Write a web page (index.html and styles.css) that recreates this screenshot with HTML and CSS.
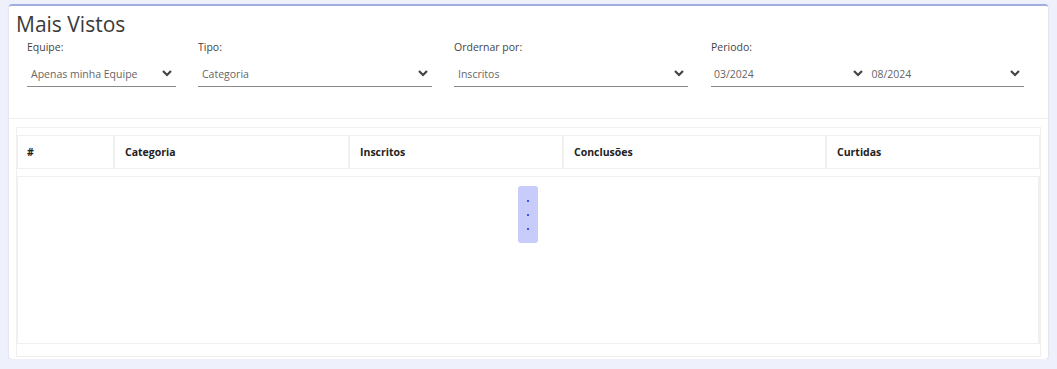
FILE: index.html
```html
<!DOCTYPE html>
<html lang="pt-BR">
<head>
    <meta charset="UTF-8">
    <meta name="viewport" content="width=device-width, initial-scale=1.0">
    <title>Mais Vistos</title>
    <link rel="stylesheet" href="styles.css">
</head>
<body>
    <div class="card">
        <h1 class="card-title">Mais Vistos</h1>
        <div class="filters">
            <div class="filter filter-equipe">
                <label>Equipe:</label>
                <div class="select">
                    <span>Apenas minha Equipe</span>
                    <svg class="chevron" viewBox="0 0 10 7"><polyline points="1,1 5,5 9,1"/></svg>
                </div>
            </div>
            <div class="filter filter-wide">
                <label>Tipo:</label>
                <div class="select">
                    <span>Categoria</span>
                    <svg class="chevron" viewBox="0 0 10 7"><polyline points="1,1 5,5 9,1"/></svg>
                </div>
            </div>
            <div class="filter filter-wide">
                <label>Ordernar por:</label>
                <div class="select">
                    <span>Inscritos</span>
                    <svg class="chevron" viewBox="0 0 10 7"><polyline points="1,1 5,5 9,1"/></svg>
                </div>
            </div>
            <div class="filter filter-periodo">
                <label>Periodo:</label>
                <div class="period">
                    <div class="select select-half">
                        <span>03/2024</span>
                        <svg class="chevron" viewBox="0 0 10 7"><polyline points="1,1 5,5 9,1"/></svg>
                    </div>
                    <div class="select select-half">
                        <span>08/2024</span>
                        <svg class="chevron" viewBox="0 0 10 7"><polyline points="1,1 5,5 9,1"/></svg>
                    </div>
                </div>
            </div>
        </div>
        <div class="table-section">
            <div class="table-box">
                <table class="table-head">
                    <tr>
                        <th class="col-num">#</th>
                        <th class="col-cat">Categoria</th>
                        <th class="col-ins">Inscritos</th>
                        <th class="col-con">Conclusões</th>
                        <th>Curtidas</th>
                    </tr>
                </table>
                <div class="table-body">
                    <!-- loading -->
                    <div class="loader">
                        <span class="dot"></span>
                        <span class="dot"></span>
                        <span class="dot"></span>
                    </div>
                </div>
            </div>
        </div>
    </div>
</body>
</html>
```

FILE: styles.css
```css
body {
    margin: 0;
    padding: 4px 9px 0;
    background-color: #eef0fb;
    font-family: "Open Sans", Arial, sans-serif;
    color: #3a3a3a;
}
.card {
    height: 353px;
    background-color: #fff;
    border-top: 2px solid #a1acdf;
    border-radius: 3px;
    box-shadow: 0 1px 2px rgba(0, 0, 0, 0.15);
}
.card-title {
    margin: 0;
    padding: 5px 7px 0;
    font-size: 21px;
    font-weight: 400;
    line-height: 27px;
    color: #3b3b3b;
}
.filters {
    display: flex;
    padding: 2px 24px 0 18px;
    height: 78px;
    border-bottom: 1px solid #efefef;
    box-sizing: content-box;
}
.filter {
    display: flex;
    flex-direction: column;
}
.filter-equipe {
    width: 149px;
    margin-right: 22px;
}
.filter-wide {
    width: 234px;
    margin-right: 22px;
}
.filter-periodo {
    flex: 1;
    margin-left: 1px;
}
.filter label {
    font-size: 10.5px;
    line-height: 14px;
    color: #444;
}
.select {
    display: flex;
    align-items: center;
    justify-content: space-between;
    margin-top: 7px;
    height: 25px;
    padding: 0 4px 0 4px;
    border-bottom: 1px solid #8a8a8a;
    font-size: 10.5px;
    color: #666;
}
.period {
    display: flex;
    border-bottom: 1px solid #8a8a8a;
    margin-top: 7px;
}
.period .select {
    margin-top: 0;
    border-bottom: none;
}
.select-half {
    flex: 1;
}
.select-half:first-child {
    padding-left: 3px;
    padding-right: 5px;
}
.chevron {
    width: 10px;
    height: 7px;
    fill: none;
    stroke: #444;
    stroke-width: 2.2;
}
.table-section {
    padding: 8px 7px 0;
}
.table-box {
    height: 221px;
    border: 1px solid #efefef;
    padding-top: 7px;
}
.table-head {
    width: 100%;
    border-collapse: separate;
    border-spacing: 0;
}
.table-head th {
    height: 32px;
    padding: 0 9px 0 10px;
    border: 1px solid #efefef;
    text-align: left;
    font-size: 10.5px;
    font-weight: 700;
    color: #222;
}
.col-num { width: 77px; }
.col-cat { width: 214px; }
.col-ins { width: 193px; }
.col-con { width: 242px; }
.table-head th:first-child {
    padding-left: 9px;
}
.table-body {
    margin-top: 7px;
    height: 166px;
    border: 1px solid #efefef;
    border-right-width: 2px;
    display: flex;
    justify-content: center;
    align-items: flex-start;
}
.loader {
    margin-top: 9px;
    width: 20px;
    height: 57px;
    border-radius: 3px;
    background-color: #c7ccfa;
    display: flex;
    flex-direction: column;
    align-items: center;
    justify-content: center;
    gap: 12px;
}
.dot {
    width: 2px;
    height: 2px;
    background-color: #3f51f0;
}
```
